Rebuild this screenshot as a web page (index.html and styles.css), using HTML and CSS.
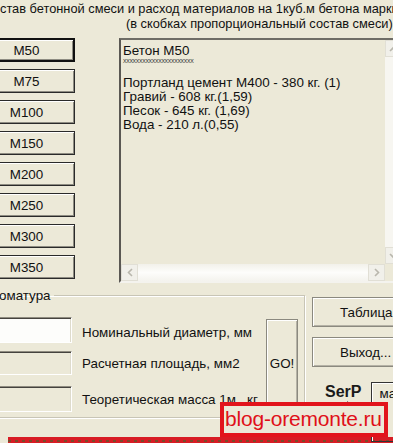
FILE: index.html
```html
<!DOCTYPE html>
<html lang="ru">
<head>
<meta charset="utf-8">
<title>Бетон</title>
<link rel="stylesheet" href="styles.css">
</head>
<body>
<div class="window">
  <div class="title">
    <div class="l1">став бетонной смеси и расход материалов на 1куб.м бетона марки</div>
    <div class="l2">(в скобках пропорциональный состав смеси)</div>
  </div>

  <div class="main">
    <div class="grades">
      <button class="btn grade default">M50</button>
      <button class="btn grade">M75</button>
      <button class="btn grade">M100</button>
      <button class="btn grade">M150</button>
      <button class="btn grade">M200</button>
      <button class="btn grade">M250</button>
      <button class="btn grade">M300</button>
      <button class="btn grade">M350</button>
    </div>

    <div class="memo">
      <div class="memo-text">
        <div class="ln">Бетон M50</div>
        <div class="stars">xxxxxxxxxxxxxxxxxxxxxx</div>
        <div class="ln gap">Портланд цемент М400 - 380 кг. (1)</div>
        <div class="ln">Гравий - 608 кг.(1,59)</div>
        <div class="ln">Песок - 645 кг. (1,69)</div>
        <div class="ln">Вода - 210 л.(0,55)</div>
      </div>
      <div class="vscroll">
        <div class="sbtn"><svg width="9" height="6" viewBox="0 0 9 6"><path d="M1 5 L4.5 1.5 L8 5" fill="none" stroke="#b9b7ad" stroke-width="1.6"/></svg></div>
        <div class="strack"></div>
        <div class="sbtn"><svg width="9" height="6" viewBox="0 0 9 6"><path d="M1 1 L4.5 4.5 L8 1" fill="none" stroke="#b9b7ad" stroke-width="1.6"/></svg></div>
      </div>
      <div class="hscroll">
        <div class="sbtn"><svg width="6" height="9" viewBox="0 0 6 9"><path d="M5 1 L1.5 4.5 L5 8" fill="none" stroke="#b9b7ad" stroke-width="1.6"/></svg></div>
        <div class="htrack"></div>
        <div class="sbtn"><svg width="6" height="9" viewBox="0 0 6 9"><path d="M1 1 L4.5 4.5 L1 8" fill="none" stroke="#b9b7ad" stroke-width="1.6"/></svg></div>
      </div>
      <div class="corner"></div>
    </div>
  </div>

  <div class="bottom">
    <fieldset class="group">
      <legend>оматура</legend>
      <div class="gbody">
        <div class="fields">
          <div class="row r1"><div class="field white"></div><span class="lbl">Номинальный диаметр, мм</span></div>
          <div class="row r2"><div class="field"></div><span class="lbl">Расчетная площадь, мм2</span></div>
          <div class="row r3"><div class="field"></div><span class="lbl">Теоретическая масса 1м., кг</span></div>
        </div>
        <button class="btn go">GO!</button>
      </div>
    </fieldset>

    <div class="side">
      <button class="btn wide">Таблица</button>
      <button class="btn wide">Выход...</button>
      <div class="serp-row">
        <span class="serp">SerP</span>
        <div class="mbox">ма</div>
      </div>
    </div>
  </div>

  <div class="stripe"></div>

  <svg class="pointer" width="20" height="18" viewBox="0 0 20 18"><path d="M1 1 C6 6, 10 8, 15 10 L17 15" fill="none" stroke="#8a8880" stroke-width="1"/></svg>
  <div class="watermark">blog-oremonte.ru</div>
</div>
</body>
</html>
```

FILE: styles.css
```css
html, body {
  margin: 0;
  padding: 0;
  background: #ece9d8;
}

.window {
  position: relative;
  width: 393px;
  height: 443px;
  overflow: hidden;
  background: #ece9d8;
  font-family: "Liberation Sans", Arial, sans-serif;
  font-size: 13.4px;
  color: #111;
}

.title {
  padding-top: 1px;
  height: 30px;
  font-size: 12.8px;
  line-height: 15px;
  white-space: nowrap;
}
.title .l1 { margin-left: 0; }
.title .l2 { padding-left: 126px; }

.main {
  display: flex;
  gap: 44px;
  margin-top: 7px;
  height: 245px;
}

.grades {
  display: flex;
  flex-direction: column;
  gap: 7px;
  margin-left: -22px;
  width: 97px;
  flex-shrink: 0;
}

.btn {
  font-family: "Liberation Sans", Arial, sans-serif;
  font-size: 13.4px;
  color: #111;
  background: #ece9d8;
  padding: 0;
  margin: 0;
  cursor: default;
}

.grade {
  height: 24px;
  border: 1px solid #2a2a2a;
  box-shadow: inset 1px 1px #ffffff, inset -1px -1px #8e8c82;
  padding-left: 0;
}
.grade.default {
  border: 2px solid #111;
}

.memo {
  width: 285px;
  height: 245px;
  flex-shrink: 0;
  box-sizing: border-box;
  border-top: 2px solid #6f6d66;
  border-left: 2px solid #5a5853;
  border-right: 2px solid #fff;
  border-bottom: 2px solid #f4f3ee;
  display: grid;
  grid-template-columns: 1fr 17px;
  grid-template-rows: 1fr 17px;
  background: #ece9d8;
}

.memo-text {
  padding: 4px 0 0 2px;
  white-space: nowrap;
  overflow: hidden;
  line-height: 14px;
}
.memo-text .stars {
  font-size: 7px;
  line-height: 6px;
  letter-spacing: -0.3px;
  color: #444;
}
.memo-text .gap { margin-top: 12px; }

.vscroll {
  display: flex;
  flex-direction: column;
  background: #f7f6f1;
}
.strack { flex: 1; }
.hscroll {
  display: flex;
  background: linear-gradient(#f2f1ea, #fdfdfb 50%, #f4f3ee);
}
.htrack { flex: 1; }
.sbtn {
  width: 17px;
  height: 17px;
  box-sizing: border-box;
  border: 1px solid #e1dfd5;
  background: #f1f0ea;
  display: flex;
  align-items: center;
  justify-content: center;
}
.corner { background: #ece9d8; }

.bottom {
  display: flex;
  gap: 7px;
  margin-top: 5px;
  height: 130px;
}

.group {
  margin: 0 0 0 -60px;
  width: 365px;
  height: 130px;
  box-sizing: border-box;
  padding: 0;
  min-width: 0;
  flex-shrink: 0;
  border: 1px solid #c8c5b6;
  box-shadow: inset 1px 1px #fff, 1px 1px #fff;
}
.group legend {
  margin-left: 58px;
  padding: 0 3px 0 0;
  line-height: 15px;
  height: 15px;
}

.gbody {
  display: flex;
  padding-top: 14px;
}

.fields {
  flex: 1;
  display: flex;
  flex-direction: column;
}
.row {
  display: flex;
  align-items: center;
  gap: 10px;
}
.row.r1 { height: 26px; }
.row.r2 { height: 24px; margin-top: 8px; }
.row.r3 { height: 26px; margin-top: 11px; }
.row .lbl { white-space: nowrap; }
.row.r1 .lbl { padding-top: 5px; }

.field {
  width: 131px;
  height: 100%;
  flex-shrink: 0;
  box-sizing: border-box;
  border-top: 1px solid #8f8c80;
  border-right: 1px solid #fff;
  border-bottom: 1px solid #fff;
  box-shadow: inset 0 1px #45433e, inset -1px 0 #dedbcc;
  background: #ece9d8;
}
.field.white { background: #fdfdfb; }

.go {
  width: 32px;
  height: 89px;
  margin: 2px 6px 0 0;
  border: 1px solid #8b897f;
  box-shadow: inset 1px 1px #fff, inset -1px -1px #b5b2a6;
  align-self: flex-start;
}

.side {
  display: flex;
  flex-direction: column;
  padding-top: 9px;
}
.wide {
  width: 104px;
  height: 30px;
  flex-shrink: 0;
  border: 1px solid #8b897f;
  box-shadow: inset 1px 1px #fff, inset -1px -1px #b5b2a6;
  text-align: left;
  padding-left: 27px;
}
.wide + .wide { margin-top: 10px; }

.serp-row {
  display: flex;
  align-items: flex-start;
  margin-top: 15px;
}
.serp {
  margin-left: 13px;
  font-weight: bold;
  font-size: 16px;
  line-height: 18px;
  margin-top: 1px;
  color: #1a1a1a;
}
.mbox {
  margin-left: 10px;
  width: 30px;
  height: 60px;
  box-sizing: border-box;
  border: 1px solid #333;
  box-shadow: inset 1px 1px #fff;
  padding: 3px 0 0 7px;
  line-height: 15px;
}

.stripe {
  margin: 19px 0 0 8px;
  height: 8px;
  background-color: #d81c24;
  background-image: repeating-linear-gradient(90deg, #7b4a2a 0 3px, #d81c24 3px 7px);
  background-size: 100% 2px;
  background-position: 0 3px;
  background-repeat: no-repeat;
}

.pointer {
  position: absolute;
  left: 346px;
  top: 400px;
}

.watermark {
  position: absolute;
  left: 220px;
  top: 402px;
  width: 168px;
  height: 35px;
  box-sizing: border-box;
  border: 4px solid #e2141c;
  background: #ece9d8;
  color: #e01018;
  font-size: 21px;
  line-height: 26px;
  padding-left: 1px;
  white-space: nowrap;
  overflow: hidden;
  letter-spacing: -0.2px;
}
```
